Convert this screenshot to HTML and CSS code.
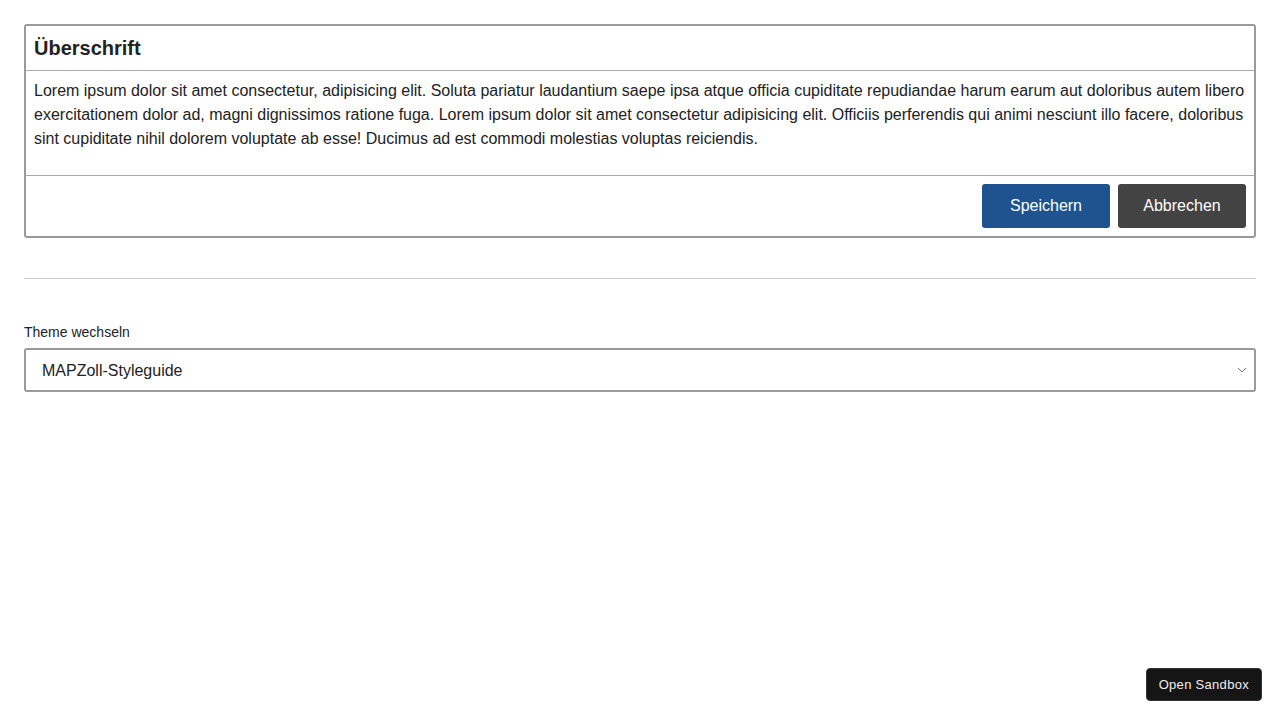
FILE: index.html
```html
<!DOCTYPE html>
<html lang="de">
<head>
<meta charset="utf-8">
<title>Card</title>
<link rel="stylesheet" href="styles.css">
</head>
<body>
<main class="page">
  <section class="card">
    <header class="card-header">Überschrift</header>
    <div class="card-body">
      <p>Lorem ipsum dolor sit amet consectetur, adipisicing elit. Soluta pariatur laudantium saepe ipsa atque officia cupiditate repudiandae harum earum aut doloribus autem libero exercitationem dolor ad, magni dignissimos ratione fuga. Lorem ipsum dolor sit amet consectetur adipisicing elit. Officiis perferendis qui animi nesciunt illo facere, doloribus sint cupiditate nihil dolorem voluptate ab esse! Ducimus ad est commodi molestias voluptas reiciendis.</p>
    </div>
    <footer class="card-footer">
      <button class="btn btn-primary">Speichern</button>
      <button class="btn btn-secondary">Abbrechen</button>
    </footer>
  </section>
  <hr class="divider">
  <div class="field">
    <label class="field-label" for="theme">Theme wechseln</label>
    <div class="select-wrap">
      <select id="theme" class="select">
        <option>MAPZoll-Styleguide</option>
      </select>
      <svg class="select-arrow" width="10" height="6" viewBox="0 0 10 6"><path d="M1 1l4 4 4-4" fill="none" stroke="#777" stroke-width="1"/></svg>
    </div>
  </div>
</main>
<button class="sandbox">Open Sandbox</button>
</body>
</html>
```
FILE: styles.css
```css
* { box-sizing: border-box; }
html, body { margin: 0; background: #fff; }
body {
  font-family: "Liberation Sans", Arial, Helvetica, sans-serif;
  color: #222;
}
.page { padding: 24px; }
.card {
  border: 2px solid #9a9a9a;
  border-radius: 3px;
}
.card-header {
  padding: 8px;
  font-size: 20px;
  font-weight: bold;
  line-height: 28px;
  border-bottom: 1px solid #aaa;
}
.card-body { padding: 8px; }
.card-body p {
  margin: 0 0 16px;
  font-size: 16px;
  line-height: 24px;
}
.card-footer {
  display: flex;
  justify-content: flex-end;
  gap: 8px;
  padding: 8px;
  border-top: 1px solid #aaa;
}
.btn {
  width: 128px;
  height: 44px;
  border: none;
  border-radius: 3px;
  color: #fff;
  font-family: "Liberation Sans", Arial, sans-serif;
  font-size: 16px;
  cursor: pointer;
}
.btn-primary { background: #1f5390; }
.btn-secondary { background: #434343; }
.divider {
  margin: 40px 0 44px;
  border: none;
  border-top: 1px solid #ccc;
}
.field-label {
  display: block;
  font-size: 14px;
  line-height: 18px;
  margin-bottom: 7px;
}
.select-wrap { position: relative; }
.select {
  width: 100%;
  height: 44px;
  appearance: none;
  -webkit-appearance: none;
  background: #fff;
  border: 2px solid #9a9a9a;
  border-radius: 3px;
  padding: 0 16px;
  font-family: "Liberation Sans", Arial, sans-serif;
  font-size: 16px;
  color: #222;
}
.select-arrow {
  position: absolute;
  right: 9px;
  top: 19px;
}
.sandbox {
  position: fixed;
  right: 18px;
  bottom: 19px;
  height: 33px;
  padding: 0 12px;
  background: #151515;
  color: #eee;
  border: 1px solid #333;
  border-radius: 4px;
  font-family: "Liberation Sans", Arial, sans-serif;
  font-size: 13px;
  letter-spacing: 0.3px;
}
```
